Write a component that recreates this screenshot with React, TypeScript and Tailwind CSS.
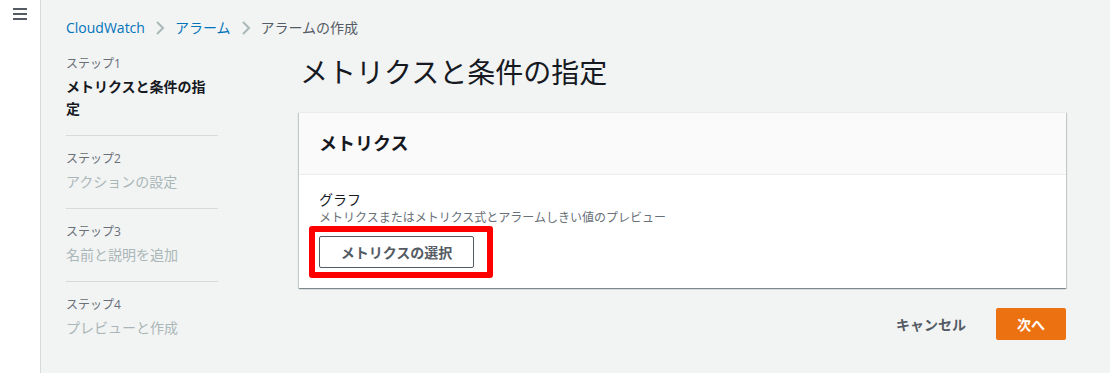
import React from "react";

const font = { fontFamily: '"Open Sans", "Noto Sans CJK JP", sans-serif' };

type Step = { label: string; title: string; active?: boolean };

const steps: Step[] = [
  { label: "ステップ1", title: "メトリクスと条件の指定", active: true },
  { label: "ステップ2", title: "アクションの設定" },
  { label: "ステップ3", title: "名前と説明を追加" },
  { label: "ステップ4", title: "プレビューと作成" },
];

const Chevron = () => (
  <svg width="10" height="16" viewBox="0 0 10 16" className="mx-[10px] shrink-0">
    <polyline points="2,2 8,8 2,14" fill="none" stroke="#aab7b8" strokeWidth="2" />
  </svg>
);

const StepNav = () => (
  <nav className="w-[152px] shrink-0">
    {steps.map((s, i) => (
      <div
        key={s.label}
        className={`pb-[15px] ${i === 0 ? "" : "pt-[13px] border-t border-[#d5dbdb]"}`}
      >
        <div className="text-[12px] leading-[20px] text-[#687078]">{s.label}</div>
        <div
          className={`mt-[2px] text-[14px] leading-[22px] ${
            s.active ? "font-bold text-[#16191f]" : "text-[#aab7b8]"
          }`}
        >
          {s.title}
        </div>
      </div>
    ))}
  </nav>
);

export default function App() {
  return (
    <div className="flex w-[1110px] h-[373px] bg-[#f2f3f3] overflow-hidden" style={font}>
      {/* side bar */}
      <div className="w-[41px] shrink-0 bg-white border-r border-[#d5dbdb] pt-[8px] pl-[13px]">
        <svg width="14" height="13" viewBox="0 0 14 13">
          <rect x="0" y="0" width="14" height="2" fill="#545b64" />
          <rect x="0" y="5" width="14" height="2" fill="#545b64" />
          <rect x="0" y="10" width="14" height="2" fill="#545b64" />
        </svg>
      </div>

      <main className="flex-1 pl-[25px] pr-[44px] pt-[18px]">
        {/* breadcrumb */}
        <div className="flex items-center h-[20px] text-[14px] leading-[20px]">
          <span className="text-[#0073bb]">CloudWatch</span>
          <Chevron />
          <span className="text-[#0073bb]">アラーム</span>
          <Chevron />
          <span className="text-[#545b64]">アラームの作成</span>
        </div>

        <div className="flex gap-[81px] mt-[16px]">
          <StepNav />

          <section className="flex-1">
            <h1 className="text-[28px] leading-[36px] text-[#16191f] pl-[1px]">
              メトリクスと条件の指定
            </h1>

            <div className="mt-[22px] bg-white border-t border-[#eaeded] shadow-[0_1px_1px_0_rgba(0,28,36,0.3),1px_1px_1px_0_rgba(0,28,36,0.15),-1px_1px_1px_0_rgba(0,28,36,0.15)]">
              <div className="h-[62px] flex items-center px-[20px] bg-[#fafafa] border-b border-[#eaeded]">
                <h2 className="text-[18px] font-bold text-[#16191f]">メトリクス</h2>
              </div>
              <div className="px-[20px] pt-[15px] pb-[20px]">
                <div className="text-[14px] leading-[20px] text-[#16191f]">グラフ</div>
                <div className="text-[12px] leading-[16px] text-[#687078]">
                  メトリクスまたはメトリクス式とアラームしきい値のプレビュー
                </div>
                <div className="relative inline-block mt-[10px]">
                  <button className="h-[32px] w-[155px] bg-white border border-[#545b64] rounded-[2px] text-[14px] font-bold text-[#545b64]">
                    メトリクスの選択
                  </button>
                  <div className="absolute left-[-10px] top-[-10px] w-[184px] h-[52px] border-[6px] border-[#ff0000] rounded-[3px] pointer-events-none" />
                </div>
              </div>
            </div>

            <div className="flex justify-end items-center mt-[20px]">
              <button className="text-[14px] font-bold text-[#545b64] mr-[30px]">キャンセル</button>
              <button className="h-[32px] w-[70px] bg-[#ec7211] rounded-[2px] text-[14px] font-bold text-white">
                次へ
              </button>
            </div>
          </section>
        </div>
      </main>
    </div>
  );
}
